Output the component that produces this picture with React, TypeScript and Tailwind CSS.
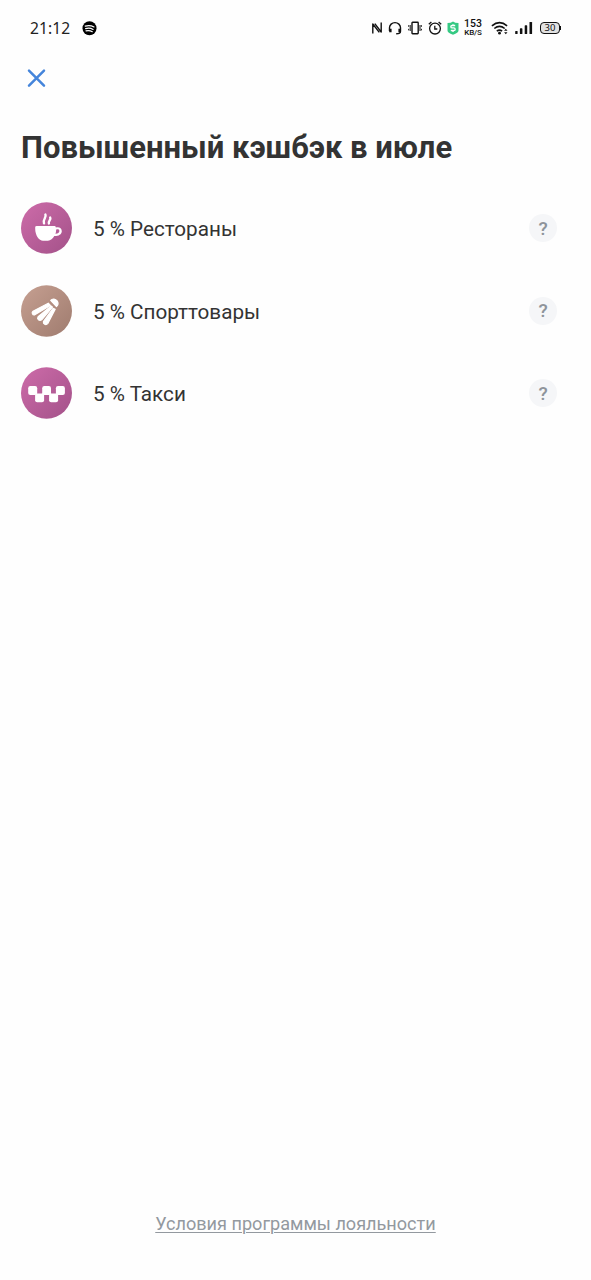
import type { ReactNode } from "react";

function Badge({ id, from, to, children }: { id: string; from: string; to: string; children: ReactNode }) {
  return (
    <svg viewBox="0.5 0.2 51 52" className="h-[52px] w-[51px] shrink-0" aria-hidden="true">
      <defs>
        <linearGradient id={id} x1="0.1" y1="0.1" x2="0.9" y2="0.9">
          <stop offset="0" stopColor={from} />
          <stop offset="1" stopColor={to} />
        </linearGradient>
      </defs>
      <ellipse cx="26" cy="26.2" rx="25.5" ry="25.8" fill={`url(#${id})`} />
      {children}
    </svg>
  );
}

function CupIcon() {
  return (
    <Badge id="cup" from="#c969a6" to="#a7548c">
      <path d="M16.2 24.3H34.2Q35.4 24.3 35.4 25.8C38.5 24.8 41.3 26.6 41.3 29.4C41.3 32.5 38 34.4 33.8 34.3C32.5 37 30 39 27.5 39H22.5C18.5 39 14.7 33.5 14.7 27V25.5Q14.7 24.3 16.2 24.3Z" fill="#fff" />
      <path d="M35.6 27.9C37.3 27 38.9 27.7 38.9 29.3C38.9 31 37.2 32 34.9 31.9C35.4 31 35.6 29.5 35.6 27.9Z" fill="#b55d98" />
      <path d="M24.9 12.7C26.4 15.7 22 17.3 23.5 21.5M29.7 15.7C31 17.9 27.4 19.2 28.4 21.7" fill="none" stroke="#fff" strokeWidth="2.4" strokeLinecap="round" />
    </Badge>
  );
}

function ShuttlecockIcon() {
  return (
    <Badge id="sport" from="#c29c8e" to="#a37f72">
      <g fill="#fff" stroke="#fff" strokeWidth="1.2" strokeLinejoin="round">
        <path d="M30.2 15.6C32 13.4 35 14 36.6 16.1C38 18.3 37.6 20.4 36 21.7Z" />
        <path d="M27.8 18.4L29.9 20.6L14.3 30C12 30.6 10.8 27.7 12.5 26.4Z" />
        <path d="M30.7 21.2L32 22.3L21.2 35C18.8 36.6 16.1 34.2 17.6 32Z" />
        <path d="M32.6 23.6L34.7 24.5L27.2 38.8C25.4 40.7 22.4 39.3 22.9 36.9Z" />
      </g>
    </Badge>
  );
}

function TaxiIcon() {
  return (
    <Badge id="taxi" from="#c969a6" to="#a7548c">
      <g fill="#fff">
        <rect x="7.7" y="19.3" width="9" height="9" rx="2.1" />
        <rect x="21.7" y="19.3" width="8.8" height="9" rx="2.1" />
        <rect x="35.4" y="19.3" width="9" height="9" rx="2.1" />
        <rect x="14.6" y="26.7" width="9" height="8.8" rx="2.1" />
        <rect x="28.6" y="26.7" width="9" height="8.8" rx="2.1" />
        <path d="M15.4 25.6l2.2 2.2-1.1 1.1-2.2-2.2zM22.8 25.6l-2.2 2.2 1.3 1.3 2.2-2.2zM29.4 25.6l2.2 2.2-1.3 1.3-2.2-2.2zM36.7 25.6l-2.2 2.2 1.3 1.3 2.2-2.2z" />
      </g>
    </Badge>
  );
}

function StatusBar() {
  return (
    <header className="flex h-14 items-center pl-[30px] pr-[30px] text-black">
      <span className="mt-[2px] w-[43px] font-['Noto_Sans','Open_Sans',sans-serif] text-[15.6px] leading-none tracking-[0.1px] text-[#222]">21:12</span>
      <svg viewBox="0 0 15 15" className="ml-[9px] h-[15px] w-[15px]">
        <circle cx="7.5" cy="7.2" r="7" />
        <path d="M3.2 5.1C6.2 4.2 9.4 4.5 12 5.9M3.6 7.6C6.2 6.9 8.8 7.1 11.1 8.4M4 9.9C6.2 9.4 8.3 9.6 10.3 10.7" fill="none" stroke="#fff" strokeWidth="1.15" strokeLinecap="round" />
      </svg>
      <div className="ml-auto flex items-center">
        <svg viewBox="0 0 12 14" className="h-[14px] w-3" fill="none" stroke="#111" strokeWidth="1.4">
          <path d="M1.8 12.4V3L8.3 11.4M3.8 2.6L10.2 11V1.6" strokeLinejoin="round" />
        </svg>
        <svg viewBox="0 0 14 14" className="ml-[5px] h-[14px] w-[14px]" fill="none" stroke="#111" strokeWidth="1.4">
          <path d="M1.5 10V6.8A5.5 5.2 0 0 1 12.5 6.8V10.2Q12.5 12.8 8.2 12.8" />
          <path d="M2.4 7.8V11.2M11.6 7.8V11.2" strokeWidth="2.4" />
        </svg>
        <svg viewBox="0 0 14 14" className="ml-[6px] h-[14px] w-[14px]" fill="none" stroke="#111" strokeWidth="1.4">
          <rect x="4" y="1.3" width="6.2" height="11.4" rx="0.6" />
          <path d="M2.2 4V10M0.7 4.2V5.8M0.7 7.8V9.4M12 4V10M13.4 4.2V5.8M13.4 7.8V9.4" strokeWidth="1" />
        </svg>
        <svg viewBox="0 0 14 14" className="ml-[6px] h-[14px] w-[14px]" fill="none" stroke="#111" strokeWidth="1.3">
          <circle cx="7" cy="7.6" r="5.4" />
          <path d="M6.8 4.7V8H9.3M0.8 3.2L3.4 0.9M13.2 3.2L10.6 0.9" />
        </svg>
        <svg viewBox="0 0 12 14" className="ml-[5px] h-[14px] w-3">
          <path d="M0.5 2Q4 2 6 0.4Q8 2 11.5 2V9.5Q11.5 12 6 13.8Q0.5 12 0.5 9.5Z" fill="#35c983" />
          <path d="M8.2 4.5H5.2Q3.8 4.5 3.8 5.7T5.2 6.9H6.8Q8.2 6.9 8.2 8.2T6.8 9.5H3.8M6 3.2V4.5M6 9.5V10.9" fill="none" stroke="#fff" strokeWidth="1.3" />
        </svg>
        <div className="ml-[4px] mr-px flex w-[20px] flex-col items-center whitespace-nowrap font-[Roboto,sans-serif] text-[#111]">
          <span className="text-[10.5px] font-medium leading-[9px]">153</span>
          <span className="text-[8px] font-medium leading-[9px] tracking-[-0.2px]">KB/S</span>
        </div>
        <svg viewBox="0 0 19 15" className="ml-[7px] mr-px h-[15px] w-[19px]" fill="none" stroke="#111" strokeWidth="1.6">
          <path d="M0.9 4.8Q8.5 -1.5 16.1 4.8M3.3 7.5Q8.5 3.2 13.7 7.5M5.8 10.2Q8.5 8 11.1 10.2" />
          <circle cx="8.5" cy="12.2" r="1.4" fill="#111" stroke="none" />
          <path d="M13.1 9.8L14.8 7.8L16.5 9.8ZM13.1 11.2L14.8 13.2L16.5 11.2Z" fill="#111" stroke="none" />
        </svg>
        <svg viewBox="0 0 18 14" className="ml-[4px] h-[14px] w-[18px]" fill="#111">
          <rect x="0.2" y="10" width="2.4" height="3" rx="0.6" />
          <rect x="4.9" y="7.3" width="2.5" height="5.7" rx="0.6" />
          <rect x="9.7" y="4.3" width="2.5" height="8.7" rx="0.6" />
          <rect x="14.5" y="0.9" width="2.6" height="12.1" rx="0.6" />
        </svg>
        <div className="ml-[7px] flex items-center">
          <div className="flex h-3 w-[20px] items-center justify-center rounded-[4px] border-[1.4px] border-[#111] bg-[#e2e2e2] font-['Noto_Sans',sans-serif] text-[9.5px] leading-none text-[#111]">30</div>
          <span className="h-1 w-px bg-[#111]" />
        </div>
      </div>
    </header>
  );
}

const categories = [
  { label: "5 % Рестораны", icon: <CupIcon /> },
  { label: "5 % Спорттовары", icon: <ShuttlecockIcon /> },
  { label: "5 % Такси", icon: <TaxiIcon /> },
];

export default function App() {
  return (
    <div className="flex h-screen min-h-[1280px] w-full flex-col bg-[#fefefe] font-[Roboto,sans-serif] text-[#333333]">
      <StatusBar />
      <button type="button" aria-label="Закрыть" className="ml-[26px] mt-[12px] h-5 w-5">
        <svg viewBox="0 0 20 20" className="h-5 w-5" fill="none" stroke="#4585db" strokeWidth="2.5" strokeLinecap="round">
          <path d="M3 2.6L18 17.6M18 2.6L3 17.6" />
        </svg>
      </button>
      <h1 className="mt-[42px] whitespace-nowrap pl-[21px] text-[31px] font-bold leading-9">Повышенный кэшбэк в июле</h1>
      <ul className="mt-[36px] flex flex-col gap-[30.7px] pl-[21px] pr-[34px]">
        {categories.map((category) => (
          <li key={category.label} className="flex items-center">
            {category.icon}
            <span className="ml-[21px] mt-[2px] text-[20.7px] leading-6">{category.label}</span>
            <button type="button" className="ml-auto flex h-7 w-7 items-center justify-center rounded-full bg-[#f5f6f8] text-[19px] font-medium leading-none text-[#8e949b]">?</button>
          </li>
        ))}
      </ul>
      <footer className="mb-[43px] mt-auto text-center leading-6">
        <a className="text-[18.1px] text-[#93999f] underline decoration-1 underline-offset-2">Условия программы лояльности</a>
      </footer>
    </div>
  );
}
